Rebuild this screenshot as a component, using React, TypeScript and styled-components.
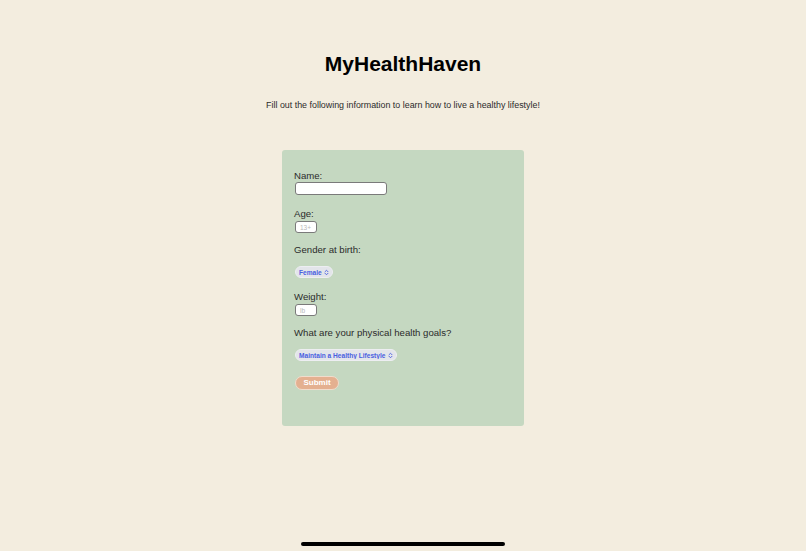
import React from "react";
import styled, { createGlobalStyle } from "styled-components";

//colors
const colors = {
  page: "#f3eddf",
  card: "#c5d8c1",
  text: "#2b2b2b",
  blue: "#4a5fe0",
  pill: "#e3e5ea",
  salmon: "#e4b090",
  white: "#FFFFFF",
};

const GlobalStyle = createGlobalStyle`
  html, body {
    margin: 0;
    padding: 0;
    background: ${colors.page};
  }
  body {
    font-family: "Liberation Sans", Arial, sans-serif;
  }
`;

//page
const Page = styled.div`
  min-height: 100vh;
  box-sizing: border-box;
  display: flex;
  flex-direction: column;
  align-items: center;
  padding-top: 51px;
`;

const Title = styled.h1`
  margin: 0;
  font-size: 21px;
  line-height: 26px;
  font-weight: 700;
  color: #000;
`;

const Subtitle = styled.p`
  margin: 22px 0 0;
  font-size: 8.9px;
  line-height: 12px;
  color: ${colors.text};
`;

//form card
const Card = styled.form`
  margin-top: 39px;
  width: 242px;
  box-sizing: border-box;
  padding: 20px 12px 36px;
  background: ${colors.card};
  border-radius: 3px;
  display: flex;
  flex-direction: column;
  align-items: flex-start;
`;

const Field = styled.div<{ $gap: number; $after: number }>`
  display: flex;
  flex-direction: column;
  align-items: flex-start;
  gap: ${(p) => p.$gap}px;
  margin-bottom: ${(p) => p.$after}px;
`;

const Label = styled.label`
  font-size: 9.6px;
  line-height: 12px;
  color: ${colors.text};
`;

const TextInput = styled.input<{ $width: number; $height: number }>`
  width: ${(p) => p.$width}px;
  height: ${(p) => p.$height}px;
  box-sizing: border-box;
  margin: 0 0 0 1px;
  padding: 0 4px;
  border: 1px solid #7a7a7a;
  border-radius: 3px;
  background: ${colors.white};
  font-family: inherit;
  font-size: 6.5px;
  outline: none;

  &::placeholder {
    color: #b8b8b8;
  }
`;

const SelectPill = styled.div`
  display: inline-flex;
  align-items: center;
  gap: 2px;
  height: 12px;
  box-sizing: border-box;
  padding: 0 3px 0 3px;
  margin-left: 1px;
  background: ${colors.pill};
  border: 1px solid #edeef2;
  border-radius: 6px;
`;

const Select = styled.select`
  appearance: none;
  -webkit-appearance: none;
  border: none;
  background: transparent;
  margin: 0;
  padding: 0;
  font-family: inherit;
  font-size: 6.6px;
  font-weight: 700;
  color: ${colors.blue};
  outline: none;
`;

const SubmitButton = styled.button`
  width: 44px;
  height: 14px;
  margin-left: 1px;
  padding: 0;
  box-sizing: border-box;
  background: ${colors.salmon};
  border: 1px solid #f1dccc;
  border-radius: 7px;
  color: ${colors.white};
  font-family: inherit;
  font-size: 8px;
  font-weight: 700;
  line-height: 12px;
  cursor: pointer;
`;

//ipad home bar
const HomeBar = styled.div`
  position: fixed;
  bottom: 5px;
  left: 50%;
  transform: translateX(-50%);
  width: 204px;
  height: 4px;
  border-radius: 2px;
  background: #000;
`;

const Chevrons: React.FC = () => (
  <svg width="5" height="7" viewBox="0 0 10 14" aria-hidden>
    <path
      d="M2 5.5 L5 2.5 L8 5.5 M2 8.5 L5 11.5 L8 8.5"
      fill="none"
      stroke={colors.blue}
      strokeWidth="1.8"
      strokeLinecap="round"
      strokeLinejoin="round"
    />
  </svg>
);

const App: React.FC = () => {
  return (
    <>
      <GlobalStyle />
      <Page>
        <Title>MyHealthHaven</Title>
        <Subtitle>
          Fill out the following information to learn how to live a healthy lifestyle!
        </Subtitle>
        <Card onSubmit={(e) => e.preventDefault()}>
          {/* Name */}
          <Field $gap={0} $after={13}>
            <Label htmlFor="name">Name:</Label>
            <TextInput id="name" type="text" $width={92} $height={13} />
          </Field>
          {/* Age */}
          <Field $gap={1} $after={11}>
            <Label htmlFor="age">Age:</Label>
            <TextInput id="age" type="text" placeholder="13+" $width={22} $height={12} />
          </Field>
          {/* Gender */}
          <Field $gap={10} $after={13}>
            <Label htmlFor="gender">Gender at birth:</Label>
            <SelectPill>
              <Select id="gender" defaultValue="female">
                <option value="female">Female</option>
                <option value="male">Male</option>
              </Select>
              <Chevrons />
            </SelectPill>
          </Field>
          {/* Weight */}
          <Field $gap={1} $after={11}>
            <Label htmlFor="weight">Weight:</Label>
            <TextInput id="weight" type="text" placeholder="lb" $width={22} $height={12} />
          </Field>
          {/* Goals */}
          <Field $gap={10} $after={15}>
            <Label htmlFor="goals">What are your physical health goals?</Label>
            <SelectPill>
              <Select id="goals" defaultValue="maintain">
                <option value="maintain">Maintain a Healthy Lifestyle</option>
                <option value="lose">Lose Weight</option>
                <option value="gain">Gain Muscle</option>
              </Select>
              <Chevrons />
            </SelectPill>
          </Field>
          <SubmitButton type="submit">Submit</SubmitButton>
        </Card>
      </Page>
      <HomeBar />
    </>
  );
};

export default App;
